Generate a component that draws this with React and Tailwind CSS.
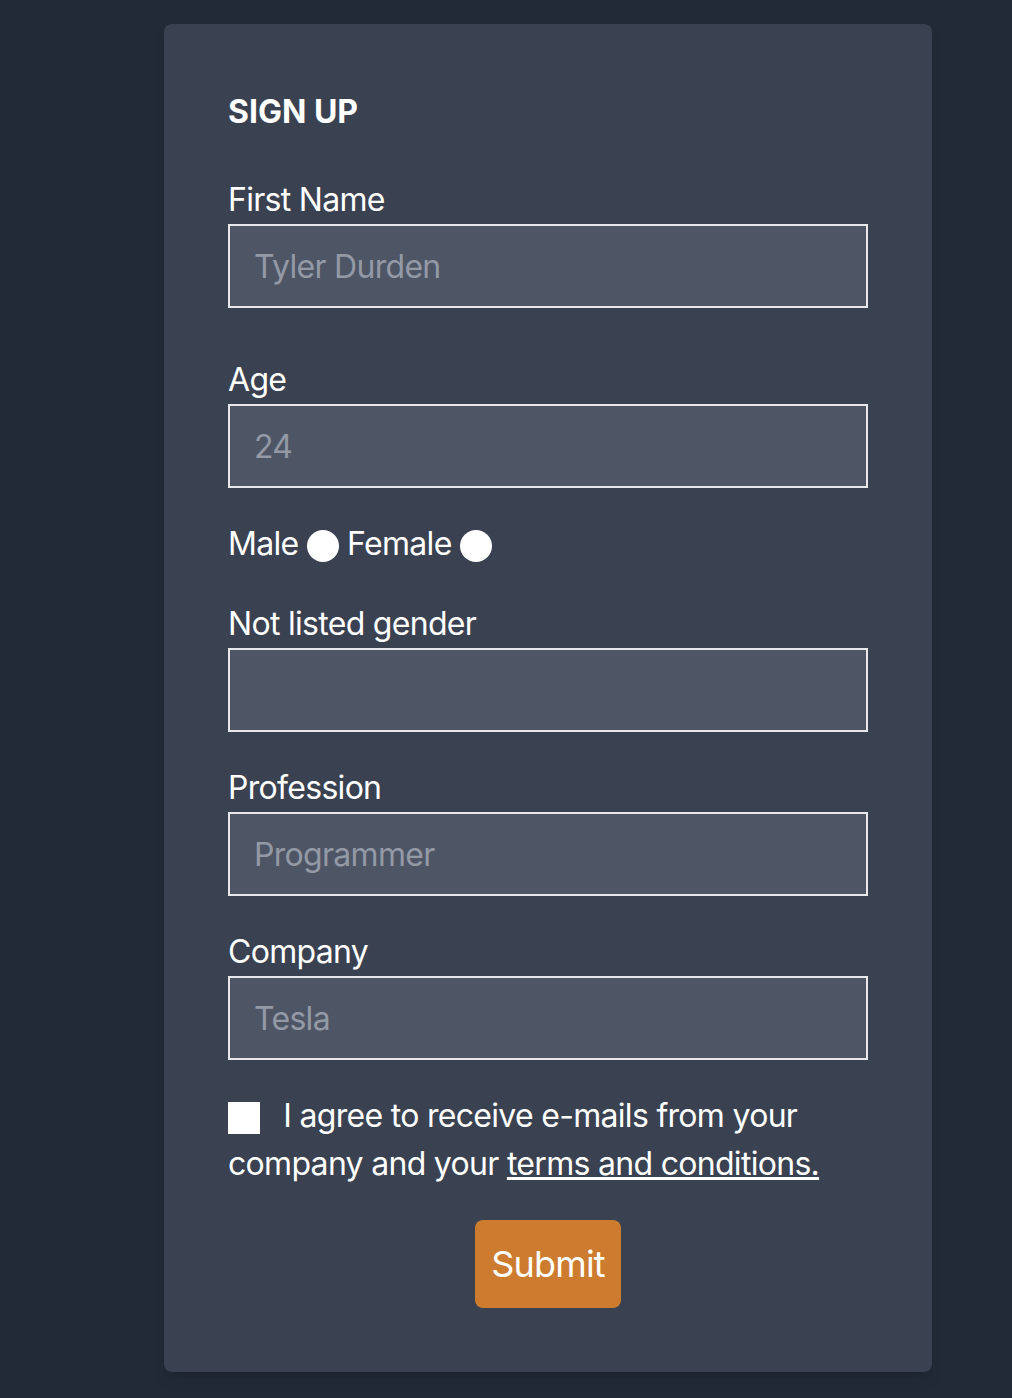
export default function App() {
  const inputClass =
    "block w-full h-[84px] border-2 border-[#e6e8ec] bg-[#4e5565] px-6 text-[32px] tracking-[-0.7px] text-white placeholder:text-[#9399a5] outline-none";

  return (
    <div
      className="min-h-screen bg-[#222a37] pt-6 pb-[26px] text-white"
      style={{ fontFamily: "Inter, 'Noto Sans', sans-serif" }}
    >
      <form
        onSubmit={(e) => e.preventDefault()}
        className="ml-[164px] w-[768px] rounded-lg bg-[#3a4151] p-16 text-[32px] leading-[48px] tracking-[-0.7px] shadow-lg"
      >
        <h1 className="mb-10 text-[32px] font-bold uppercase tracking-normal">Sign Up</h1>

        <label className="block">First Name</label>
        <input type="text" placeholder="Tyler Durden" className={inputClass} />

        <label className="mt-12 block">Age</label>
        <input type="number" placeholder="24" className={inputClass} />

        <div className="mt-8">
          Male{" "}
          <input
            type="radio"
            name="gender"
            className="inline-block h-8 w-8 appearance-none rounded-full bg-white align-middle"
          />{" "}
          Female{" "}
          <input
            type="radio"
            name="gender"
            className="inline-block h-8 w-8 appearance-none rounded-full bg-white align-middle"
          />
        </div>

        <label className="mt-8 block">Not listed gender</label>
        <input type="text" className={inputClass} />

        <label className="mt-8 block">Profession</label>
        <input type="text" placeholder="Programmer" className={inputClass} />

        <label className="mt-8 block">Company</label>
        <input type="text" placeholder="Tesla" className={inputClass} />

        <p className="mt-8">
          <input
            type="checkbox"
            className="mr-[15px] inline-block h-8 w-8 appearance-none bg-white align-middle"
          />{" "}
          I agree to receive e-mails from your company and your{" "}
          <a href="#" className="underline">
            terms and conditions.
          </a>
        </p>

        <div className="mt-8 flex justify-center">
          <button
            type="submit"
            className="rounded-lg bg-[#cc7b2f] px-4 py-4 text-[36px] leading-[56px] tracking-[-0.8px] text-white"
          >
            Submit
          </button>
        </div>
      </form>
    </div>
  );
}
